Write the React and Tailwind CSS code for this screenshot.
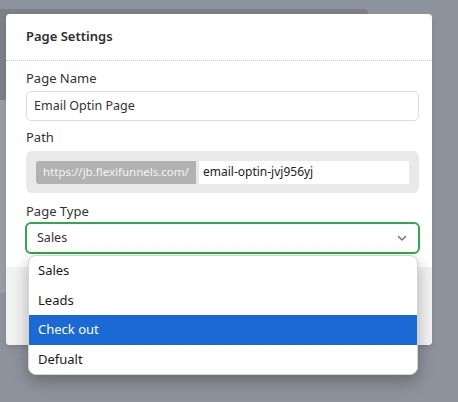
import { useState } from "react";

const OPTIONS = ["Sales", "Leads", "Check out", "Defualt"];

function Chevron() {
  return (
    <svg className="w-[12px] h-[12px] text-[#6b6f78]" fill="none" stroke="currentColor" viewBox="0 0 12 12">
      <path strokeLinecap="round" strokeLinejoin="round" strokeWidth={1.4} d="M2.5 4.5L6 8l3.5-3.5" />
    </svg>
  );
}

function Label({ children, className = "" }) {
  return <p className={`text-[13px] leading-[18px] text-[#333] ${className}`}>{children}</p>;
}

export default function App() {
  const [value] = useState("Sales");
  const [active] = useState("Check out");

  return (
    <div
      className="relative w-[458px] h-[402px] overflow-hidden bg-[#8e929c]"
      style={{ fontFamily: '"Noto Sans", "Open Sans", sans-serif' }}
    >
      {/* page behind the overlay */}
      <div className="pt-[9px]">
        <div className="w-[368px] h-[91px] bg-[#7b7f89] rounded-tr-[4px]" />
        <div className="w-[100px] h-[193px] bg-[#999ca5]" />
      </div>

      {/* Modal */}
      <div className="absolute left-[6px] top-[14px] w-[426px] h-[331px] bg-white rounded-[4px] flex flex-col shadow-md">
        <div className="h-[47px] flex items-center px-[20px] border-b border-dotted border-[#c8c8c8] shrink-0">
          <h2 className="text-[13px] font-semibold text-[#2d2d2d]">Page Settings</h2>
        </div>

        <div className="pl-[20px] pr-[13px] pt-[8px]">
          <Label className="mb-[4px]">Page Name</Label>
          <div className="h-[30px] border border-[#dcdcdc] rounded-[5px] flex items-center px-[7px] text-[12.5px] text-[#333]">
            Email Optin Page
          </div>

          <Label className="mt-[7px] mb-[5px]">Path</Label>
          <div className="h-[42px] bg-[#e9e9e9] rounded-[6px] flex items-center px-[10px] gap-[3px]">
            <div className="w-[160px] h-[23px] bg-[#b2b2b2] rounded-l-[3px] flex items-center px-[7px] text-[11.5px] text-[#f4f4f4]">
              https://jb.flexifunnels.com/
            </div>
            <div className="flex-1 h-[23px] bg-white flex items-center px-[4px] text-[12px] text-[#222]">
              email-optin-jvj956yj
            </div>
          </div>

          <Label className="mt-[9px] mb-[2px]">Page Type</Label>
          <div className="relative -mx-[1px]">
            <div className="h-[32px] border-2 border-[#2fa84f] rounded-[6px] flex items-center justify-between pl-[10px] pr-[10px] text-[12.5px] text-[#333]">
              <span>{value}</span>
              <Chevron />
            </div>

            {/* Dropdown list */}
            <div className="absolute left-[3px] top-[33px] w-[390px] bg-white rounded-[8px] border border-[#d4d4d4] shadow-[0_6px_16px_rgba(0,0,0,0.28)] overflow-hidden z-10">
              {OPTIONS.map((o) => (
                <div
                  key={o}
                  className={`h-[29.5px] flex items-center px-[9px] text-[13px] ${o === active ? "bg-[#1a69d4] text-white" : "text-[#1a1a1a]"}`}
                >
                  {o}
                </div>
              ))}
            </div>
          </div>
        </div>

        {/* footer */}
        <div className="mt-auto h-[78px] bg-[#f2f2f2] rounded-b-[4px]" />
      </div>
    </div>
  );
}
